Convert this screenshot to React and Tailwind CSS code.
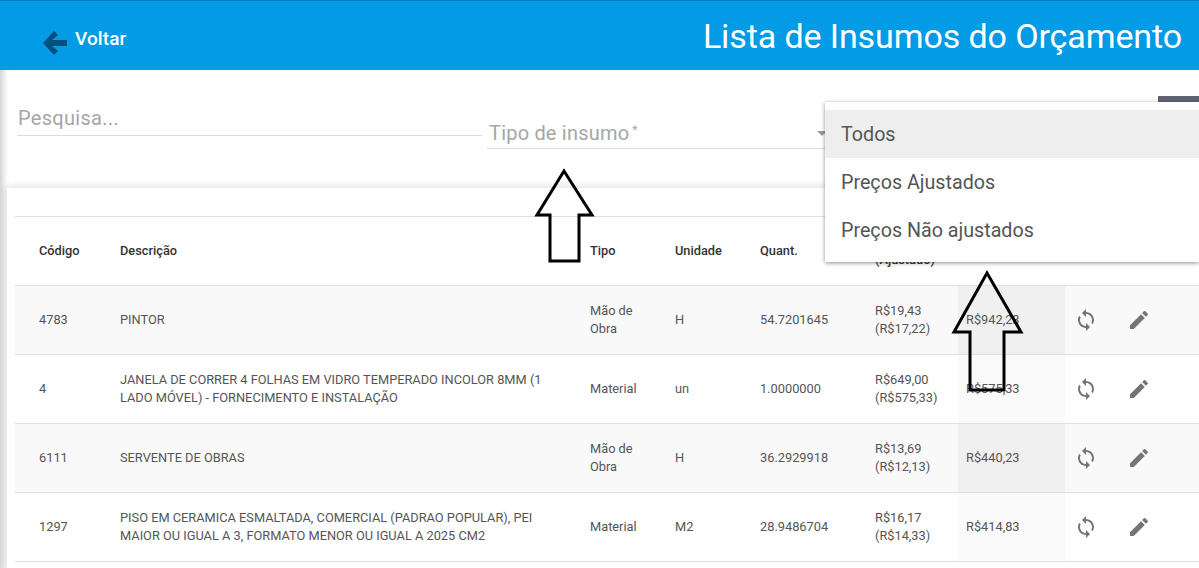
import React from 'react';
import { MdSync, MdEdit, MdArrowDropDown } from 'react-icons/md';

const rows = [
  { cod: '4783', desc: 'PINTOR', tipo: 'Mão de Obra', un: 'H', qtd: '54.7201645', preco: 'R$19,43', ajust: '(R$17,22)', total: 'R$942,23' },
  { cod: '4', desc: 'JANELA DE CORRER 4 FOLHAS EM VIDRO TEMPERADO INCOLOR 8MM (1 LADO MÓVEL) - FORNECIMENTO E INSTALAÇÃO', tipo: 'Material', un: 'un', qtd: '1.0000000', preco: 'R$649,00', ajust: '(R$575,33)', total: 'R$575,33' },
  { cod: '6111', desc: 'SERVENTE DE OBRAS', tipo: 'Mão de Obra', un: 'H', qtd: '36.2929918', preco: 'R$13,69', ajust: '(R$12,13)', total: 'R$440,23' },
  { cod: '1297', desc: 'PISO EM CERAMICA ESMALTADA, COMERCIAL (PADRAO POPULAR), PEI MAIOR OU IGUAL A 3, FORMATO MENOR OU IGUAL A 2025 CM2', tipo: 'Material', un: 'M2', qtd: '28.9486704', preco: 'R$16,17', ajust: '(R$14,33)', total: 'R$414,83' },
];

const cols = 'grid grid-cols-[105px_470px_85px_85px_115px_83px_107px_125px]';

function App() {
  return (
    <div className="relative h-[568px] w-[1199px] overflow-hidden bg-white font-['Roboto',sans-serif]">
      <header className="flex h-[70px] items-center justify-between border-t border-t-[#0277bd] bg-[#039be5] pl-[43px] pr-[17px]">
        <div className="mt-[7px] flex items-start gap-2">
          <svg className="mt-[7px]" width="24" height="24" viewBox="0 0 24 24" fill="#03507f">
            <path d="M0 12 L11 0 L15 4 L9 9 H24 V15 H9 L15 20 L11 24 Z" />
          </svg>
          <span className="mt-[3px] text-[19px] font-medium leading-[24px] tracking-[0.1px] text-white">Voltar</span>
        </div>
        <h1 className="text-[34px] leading-[40px] tracking-[-0.1px] text-white">Lista de Insumos do Orçamento</h1>
      </header>

      <main className="h-[498px] pl-[7px] shadow-[inset_7px_0_6px_-4px_rgba(0,0,0,0.2)]">
        <div className="flex h-[118px] items-start pl-[10px] pt-[26px]">
          <div className="h-[40px] w-[465px] border-b border-[#dddddd] pl-px text-[20px] leading-[44px] tracking-[0.3px] text-[#a6a6a6]">Pesquisa...</div>
          <div className="ml-[5px] mt-[13px] flex h-[40px] w-[338px] items-start justify-between border-b border-[#dddddd] pl-[2px] text-[20px] leading-[48px] tracking-[0.2px] text-[#a6a6a6]">
            <span>Tipo de insumo<span className="relative -top-[6px] ml-[3px] text-[12px]">*</span></span>
            <MdArrowDropDown className="mt-[12px] -mr-[9px] text-[#9a9a9a]" size={24} />
          </div>
          <div className="ml-auto h-[80px] w-[41px] bg-[#5f6371]" />
        </div>

        <section className="relative h-[380px] bg-white pl-2 shadow-[0_-1px_8px_rgba(0,0,0,0.14)]">
          <div className="h-[28px]" />
          <div className={`${cols} h-[70px] items-center border-y border-[#e0e0e0] text-[12.8px] font-medium leading-[18px] text-[#333333]`}>
            <div className="pl-6">Código</div>
            <div>Descrição</div>
            <div>Tipo</div>
            <div>Unidade</div>
            <div>Quant.</div>
            <div>Preço<br />(Ajustado)</div>
            <div className="pl-2">Total</div>
            <div />
          </div>
          {rows.map((r, i) => (
            <div key={r.cod} className={`${cols} h-[69px] items-center border-b border-[#e0e0e0] text-[12.8px] leading-[18px] text-[#555555] ${i % 2 === 0 ? 'bg-[#f9f9f9]' : 'bg-white'}`}>
              <div className="pl-6">{r.cod}</div>
              <div className="pr-[26px]">{r.desc}</div>
              <div className="pr-6">{r.tipo}</div>
              <div>{r.un}</div>
              <div>{r.qtd}</div>
              <div>{r.preco}<br />{r.ajust}</div>
              <div className={`flex h-full items-center pl-2 ${i % 2 === 0 ? 'bg-[#f0f0f0]' : 'bg-[#fafafa]'}`}>{r.total}</div>
              <div className="flex items-center gap-[29px] pl-[9px] text-[#757575]">
                <MdSync size={24} />
                <MdEdit size={24} />
              </div>
            </div>
          ))}
        </section>
      </main>

      {/* menu aberto do filtro de preços */}
      <div className="absolute left-[825px] top-[102px] w-[374px] bg-white py-2 text-[19.7px] text-[#555555] shadow-[0_1px_4px_rgba(0,0,0,0.45)]">
        <div className="flex h-12 items-center bg-[#eeeeee] pl-4 pt-0.5">Todos</div>
        <div className="flex h-12 items-center pl-4 pt-0.5">Preços Ajustados</div>
        <div className="flex h-12 items-center pl-4 pt-0.5">Preços Não ajustados</div>
      </div>

      {/* setas de anotação */}
      <svg className="absolute left-[530px] top-[165px]" width="70" height="100" fill="none" stroke="#000" strokeWidth="3">
        <path d="M34 6 L7 50 H20 V96 H49 V50 H62 Z" />
      </svg>
      <svg className="absolute left-[948px] top-[268px]" width="80" height="126" fill="none" stroke="#000" strokeWidth="3">
        <path d="M39 5 L6 64 H22 V122 H56 V64 H73 Z" />
      </svg>
    </div>
  );
}

export default App;
